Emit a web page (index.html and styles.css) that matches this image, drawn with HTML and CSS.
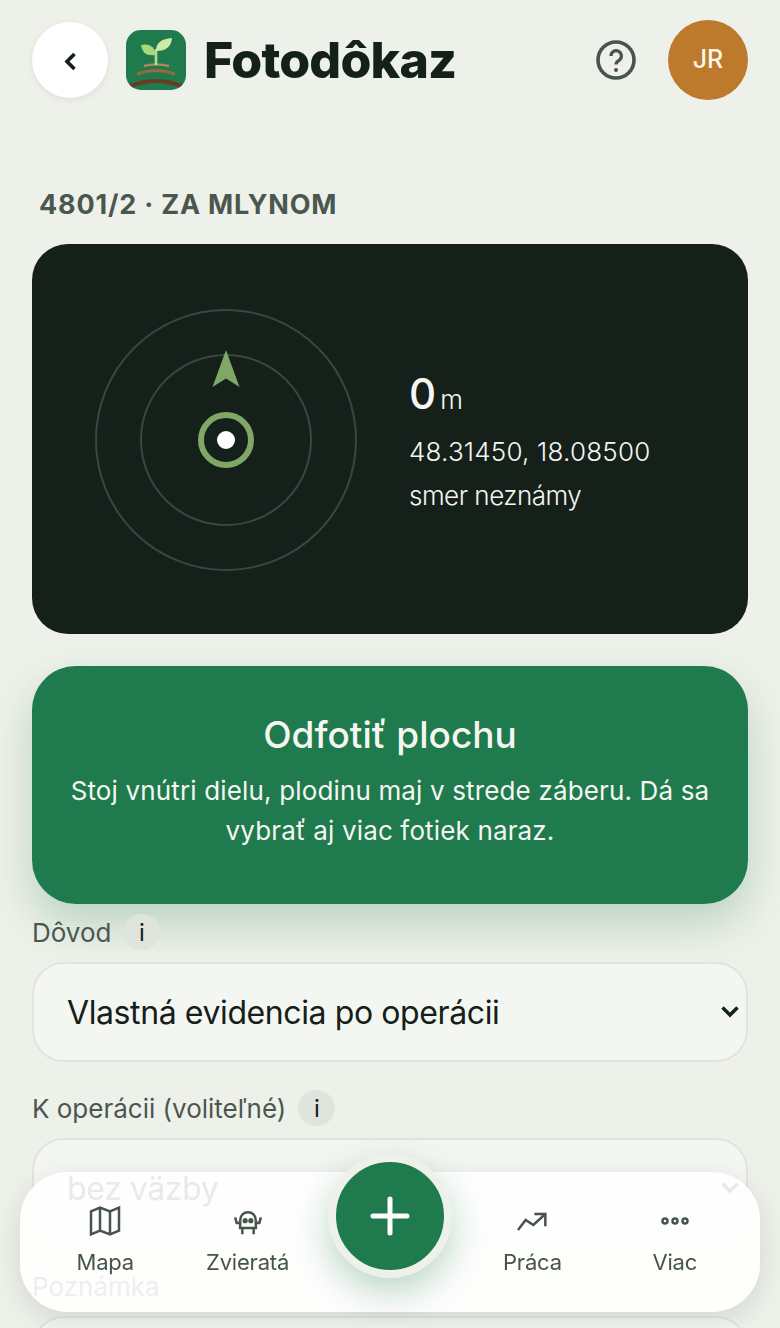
FILE: index.html
```html
<!DOCTYPE html>
<html lang="sk">
	<head>
		<meta charset="UTF-8">
		<title>Fotodôkaz</title>
		<link rel="stylesheet" href="styles.css">
	</head>
	<body>
		<header class="top">
			<button class="back">
				<svg width="24" height="24" viewBox="0 0 24 24"><path d="M16.500 6 9 13.500 16.500 21" fill="none" stroke="#14201a" stroke-width="3.600"/></svg>
			</button>
			<svg class="logo" width="60" height="60" viewBox="0 0 60 60">
				<clipPath id="logoclip"><rect width="60" height="60" rx="15"/></clipPath>
				<g clip-path="url(#logoclip)">
					<rect width="60" height="60" fill="#1f7a4d"/>
					<path d="M2 57Q30 45 58 57" fill="none" stroke="#6b3a22" stroke-width="4"/>
				</g>
				<path d="M11 44Q30 37 49 44" fill="none" stroke="#9a6a3f" stroke-width="3"/>
				<path d="M18 36Q30 33 43 36" fill="none" stroke="#b0885a" stroke-width="2.400"/>
				<path d="M30 35V19" stroke="#b7dd8c" stroke-width="2.600" fill="none"/>
				<path d="M30 25Q16 27 15 15Q28 12 30 25Z" fill="#a9d77c"/>
				<path d="M30 21Q30 9 46 8Q45 21 30 21Z" fill="#cdeaa8"/>
			</svg>
			<h1 class="brand">Fotodôkaz</h1>
			<svg class="help" width="40" height="40" viewBox="0 0 40 40">
				<circle cx="20" cy="20" r="18" fill="none" stroke="#46544c" stroke-width="3.600"/>
				<path d="M15 16a5.200 5.200 0 1 1 8 4.300c-2 1.300-3 2.200-3 4.200" fill="none" stroke="#46544c" stroke-width="3.200"/>
				<circle cx="20" cy="30" r="2" fill="#46544c"/>
			</svg>
			<div class="avatar">JR</div>
		</header>

		<h2 class="parcel">4801/2 · ZA MLYNOM</h2>

		<section class="compass">
			<svg class="radar" width="262" height="262" viewBox="0 0 262 262">
				<circle cx="131" cy="131" r="130" fill="none" stroke="#3a4640" stroke-width="2"/>
				<circle cx="131" cy="131" r="85" fill="none" stroke="#3a4640" stroke-width="2"/>
				<path d="M131 41 144.500 78 131 69.500 117.500 78Z" fill="#7fa765"/>
				<circle cx="131" cy="131" r="25" fill="none" stroke="#7fa765" stroke-width="6"/>
				<circle cx="131" cy="131" r="9" fill="#fff"/>
			</svg>
			<div class="reading">
				<div class="dist"><b>0</b>m</div>
				<div class="line">48.31450, 18.08500</div>
				<div class="line narrow">smer neznámy</div>
			</div>
		</section>

		<button class="shoot">
			<strong>Odfotiť plochu</strong>
			<span>Stoj vnútri dielu, plodinu maj v strede záberu. Dá sa vybrať aj viac fotiek naraz.</span>
		</button>

		<label class="lbl">Dôvod <i class="tip">i</i></label>
		<div class="selectbox">
			<select class="field">
				<option>Vlastná evidencia po operácii</option>
			</select>
			<svg class="chev" width="20" height="14" viewBox="0 0 20 14"><path d="M2.500 2.500 10 10l7.500-7.500" fill="none" stroke="#14201a" stroke-width="3.400"/></svg>
		</div>

		<label class="lbl">K operácii (voliteľné) <i class="tip">i</i></label>
		<div class="selectbox">
			<select class="field">
				<option>bez väzby</option>
			</select>
			<svg class="chev" width="20" height="14" viewBox="0 0 20 14"><path d="M2.500 2.500 10 10l7.500-7.500" fill="none" stroke="#14201a" stroke-width="3.400"/></svg>
		</div>

		<label class="lbl lastlbl">Poznámka</label>
		<textarea class="field note"></textarea>

		<nav class="tabs">
			<a class="tab">
				<svg width="40" height="40" viewBox="0 0 24 24"><path d="M3.600 6.200 9 4l6 2.200L20.400 4v13.800L15 20l-6-2.200L3.600 20ZM9 4v13.800M15 6.200V20"/></svg>
				Mapa
			</a>
			<a class="tab">
				<svg width="40" height="40" viewBox="0 0 24 24"><path d="M7.300 16.200v-4.700c0-3 2.200-4.700 4.700-4.700s4.700 1.700 4.700 4.700v4.700ZM7.300 13.200H5.200l-.9-3.400M16.700 13.200h2.100l.9-3.400M8.600 16.200V20M15.400 16.200V20"/><circle cx="10.300" cy="11.800" r=".8"/><circle cx="13.700" cy="11.800" r=".8"/></svg>
				Zvieratá
			</a>
			<span></span>
			<a class="tab">
				<svg width="40" height="40" viewBox="0 0 24 24"><path d="M3.600 17.400 8.200 11.400l4.600 3L20 7.800M13.400 7.800H20v7.400"/></svg>
				Práca
			</a>
			<a class="tab">
				<svg width="40" height="40" viewBox="0 0 24 24"><circle cx="6" cy="12" r="1.500"/><circle cx="12" cy="12" r="1.500"/><circle cx="18" cy="12" r="1.500"/></svg>
				Viac
			</a>
			<button class="fab">
				<svg width="40" height="40" viewBox="0 0 40 40"><path d="M20 3V37M3 20H37" stroke="#fff" stroke-width="5" stroke-linecap="round"/></svg>
			</button>
		</nav>
	</body>
</html>
```

FILE: styles.css
```css
*{
	margin:0;padding:0;
	box-sizing:border-box;
}
body{
	background:#eef1ea;
	font-family:"Inter","Liberation Sans",sans-serif;
	color:#14201a;
	padding:20px 32px 200px;
}
button{
	border:none;
	font-family:inherit;
}
.top{
	display:flex;
	align-items:center;
	height:80px;
}
.back{
	width:76px;
	height:76px;
	border-radius:50%;
	background:#fff;
	box-shadow:0 2px 6px rgba(20,32,26,.08);
	display:flex;
	align-items:center;
	justify-content:center;
	margin-right:18px;
}
.logo{
	margin-right:18px;
}
.brand{
	font-size:50px;
	font-weight:800;
	letter-spacing:-.8px;
	flex:1;
}
.help{
	margin-right:32px;
}
.avatar{
	width:80px;
	height:80px;
	border-radius:50%;
	background:#bd7a2c;
	color:#fdf6ea;
	font-size:25px;
	font-weight:500;
	padding-bottom:2px;
	display:flex;
	align-items:center;
	justify-content:center;
}
.parcel{
	margin:89px 0 23px 7px;
	font-size:27px;
	line-height:32px;
	font-weight:700;
	letter-spacing:.8px;
	color:#4a574f;
}
.compass{
	height:390px;
	border-radius:36px;
	background:#15201b;
	display:flex;
	align-items:center;
	padding:2px 0 0 63px;
	gap:52px;
	color:#f5f6f1;
}
.dist{
	font-size:26px;
	font-weight:300;
	margin:5px 0 11px;
}
.dist b{
	font-size:42px;
	font-weight:500;
	margin-right:4px;
}
.line{
	font-size:26px;
	line-height:44px;
	font-weight:300;
	letter-spacing:.2px;
}
.narrow{
	letter-spacing:-.5px;
}
.shoot{
	display:block;
	width:100%;
	height:238px;
	margin-top:32px;
	border-radius:44px;
	background:#1f7a4d;
	color:#f5f6f1;
	padding:0 32px 8px;
	text-align:center;
	box-shadow:0 20px 44px rgba(31,122,77,.25);
}
.shoot strong{
	display:block;
	font-size:37px;
	font-weight:500;
	margin-bottom:14px;
}
.shoot span{
	display:block;
	font-size:26px;
	line-height:40px;
	letter-spacing:.15px;
}
.lbl{
	display:flex;
	align-items:center;
	gap:12px;
	height:36px;
	margin-top:10px;
	font-size:26px;
	color:#4a574f;
}
.lastlbl{
	margin-top:30px;
}
.tip{
	width:37px;
	height:36px;
	border-radius:50%;
	background:#dfe5dc;
	color:#14201a;
	font-style:normal;
	font-size:24px;
	display:flex;
	align-items:center;
	justify-content:center;
}
.selectbox{
	position:relative;
	margin:12px 0 28px;
}
.chev{
	position:absolute;
	right:8px;
	top:43px;
	pointer-events:none;
}
.field{
	display:block;
	width:100%;
	height:100px;
	border:2px solid #e2e5dc;
	border-radius:32px;
	background:#f4f6f1;
	font-family:inherit;
	font-size:32px;
	letter-spacing:-.4px;
	color:#14201a;
	padding:0 33px;
	appearance:none;
}
.note{
	height:160px;
	margin-top:12px;
}
.tabs{
	position:fixed;
	left:20px;
	right:20px;
	bottom:16px;
	height:140px;
	border-radius:48px;
	background:rgba(255,255,255,.9);
	box-shadow:0 8px 28px rgba(20,32,26,.12);
	display:grid;
	grid-template-columns:repeat(5,1fr);
	padding:29px 14px 0;
}
.tab{
	display:flex;
	flex-direction:column;
	align-items:center;
	gap:8px;
	font-size:22px;
	letter-spacing:-.2px;
	color:#46544c;
}
.tab svg{
	fill:none;
	stroke:#46544c;
	stroke-width:1.500;
}
.fab{
	position:absolute;
	left:308px;
	top:-18px;
	width:124px;
	height:124px;
	border-radius:50%;
	background:#1f7a4d;
	border:8px solid #eef1ea;
	box-shadow:0 14px 36px rgba(31,122,77,.3);
	display:flex;
	align-items:center;
	justify-content:center;
}
```
